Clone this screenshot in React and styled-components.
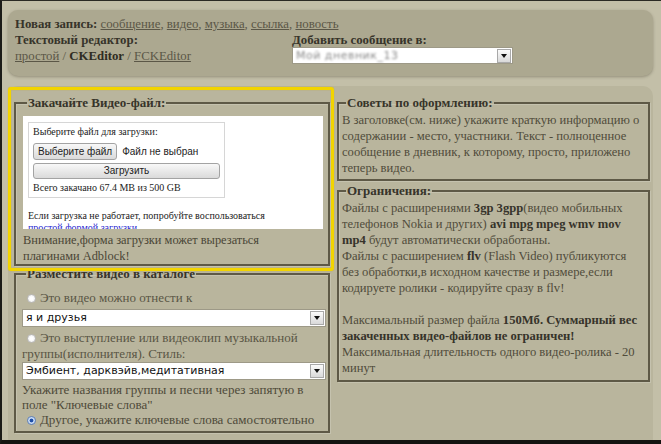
import React from "react";
import styled, { createGlobalStyle } from "styled-components";

const Global = createGlobalStyle`
  html, body { margin: 0; padding: 0; background: #c2bea7; }
  body { font-family: "Liberation Serif", "Times New Roman", serif; }
`;

const Frame = styled.div`
  width: 661px;
  height: 444px;
  box-sizing: border-box;
  background: #c3bfa8;
  border-left: 2px solid #1c1c18;
  border-top: 1px solid #2b2a24;
  border-bottom: 4px solid #141410;
  padding: 9px 8px 0 6px;
  display: flex;
  flex-direction: column;
  gap: 10px;
  overflow: hidden;
  font-size: 13px;
  color: #4b4737;
`;

const TopPanel = styled.section`
  background: #aca890;
  border-radius: 10px;
  height: 66px;
  flex: none;
  box-sizing: border-box;
  padding: 6px 7px 0 7px;
  box-shadow: 0 1px 3px rgba(60, 55, 40, 0.35);
  font-size: 12.8px;
  line-height: 16px;
  color: #3b3829;
`;

const Line = styled.div`
  white-space: nowrap;
`;

const EditorRow = styled.div`
  display: grid;
  grid-template-columns: 277px 1fr;
`;

const Column = styled.div`
  display: flex;
  flex-direction: column;
  gap: ${(p) => p.$gap || 0}px;
  min-width: 0;
`;

const Strong = styled.b`
  font-weight: bold;
  color: ${(p) => p.$c || "#37342a"};
`;

const NavLink = styled.a`
  color: #5b5747;
  text-decoration: underline;
`;

const Sep = styled.span`
  color: #5b5747;
`;

const SelectBox = styled.div`
  display: flex;
  align-items: center;
  box-sizing: border-box;
  width: ${(p) => p.$w}px;
  height: ${(p) => p.$h || 18}px;
  margin-top: ${(p) => p.$mt || 0}px;
  background: #fff;
  border: 1px solid #9d9987;
  font-family: "DejaVu Sans", Verdana, sans-serif;
  font-size: 11px;
  line-height: 14px;
  color: #111;
  padding-left: 3px;
`;

const SelectText = styled.span`
  flex: 1;
  white-space: nowrap;
  overflow: hidden;
`;

const Blurred = styled.span`
  flex: 1;
  white-space: nowrap;
  overflow: hidden;
  color: #8a8a8a;
  filter: blur(0.8px);
  letter-spacing: 0.5px;
`;

const Arrow = styled.span`
  width: 14px;
  height: 14px;
  margin-right: 1px;
  box-sizing: border-box;
  border: 1px solid #a9a9a9;
  background: linear-gradient(#fbfbfb, #d9d9d9);
  display: flex;
  align-items: center;
  justify-content: center;
  &::after {
    content: "";
    border-left: 3px solid transparent;
    border-right: 3px solid transparent;
    border-top: 4px solid #111;
  }
`;

const LowerPanel = styled.main`
  flex: 1;
  background: #b9b59d;
  border-radius: 10px 10px 0 0;
  padding: 9px 3px 0 6px;
  display: grid;
  grid-template-columns: 316px 313px;
  column-gap: 7px;
  align-items: start;
`;

const Fieldset = styled.fieldset`
  margin: 0;
  border: 2px solid #5e5946;
  padding: ${(p) => p.$pad};
  min-width: 0;
  box-shadow: inset 1px 1px 0 rgba(255, 255, 255, 0.18),
    1px 1px 0 rgba(255, 255, 255, 0.18);
`;

const Legend = styled.legend`
  padding: 0 1px;
  margin-left: 4px;
  font-weight: bold;
  font-size: 13px;
  line-height: 16px;
  color: #37342a;
`;

const Highlight = styled.div`
  position: relative;
  &::after {
    content: "";
    position: absolute;
    top: -8px;
    left: -6px;
    right: -4px;
    bottom: -5px;
    border: 3px solid #f2d400;
    border-radius: 3px;
    box-shadow: 0 0 1px #c6a600, inset 0 0 1px #c6a600;
    pointer-events: none;
    z-index: 2;
  }
`;

const UploadFrame = styled.div`
  width: 300px;
  height: 113px;
  background: #fff;
  overflow: hidden;
  box-sizing: border-box;
  padding: 6px 5px 0 5px;
  font-family: "Liberation Serif", "Times New Roman", serif;
  font-size: 10px;
  line-height: 12px;
  color: #222;
`;

const UploadForm = styled.div`
  width: 197px;
  box-sizing: border-box;
  border: 1px solid #d6d6d6;
  padding: 3px 4px 3px 4px;
  display: flex;
  flex-direction: column;
`;

const FileRow = styled.div`
  display: flex;
  align-items: center;
  gap: 5px;
  margin-top: 5px;
  white-space: nowrap;
  font-family: "Liberation Sans", Arial, sans-serif;
  font-size: 10px;
  line-height: 12px;
  color: #222;
`;

const Button = styled.button`
  box-sizing: border-box;
  flex: none;
  white-space: nowrap;
  height: ${(p) => p.$h || 17}px;
  width: ${(p) => (p.$full ? "100%" : "auto")};
  margin: ${(p) => p.$mt || 0}px 0 0 0;
  padding: 0 4px;
  border: 1px solid #a3a3a3;
  border-radius: 3px;
  background: linear-gradient(#f8f8f8, #dadada);
  font-family: "Liberation Sans", Arial, sans-serif;
  font-size: 10px;
  line-height: 12px;
  color: #222;
`;

const Small = styled.div`
  margin-top: ${(p) => p.$mt || 0}px;
  white-space: nowrap;
`;

const BlueLink = styled.a`
  color: #2a2ad0;
  text-decoration: underline;
`;

const Warning = styled.p`
  margin: 3px 0 0 0;
  font-size: 12.4px;
  line-height: 16px;
  color: #4a4636;
  white-space: nowrap;
`;

const Para = styled.p`
  margin: 0;
  font-size: 12.6px;
  line-height: 16px;
  color: #504c3b;
  white-space: nowrap;
`;

const Bold = styled.b`
  color: #36332a;
`;

const RadioLine = styled.div`
  margin-top: ${(p) => p.$mt || 0}px;
  line-height: ${(p) => p.$lh || 16}px;
  color: ${(p) => p.$c || "#5a5645"};
  white-space: nowrap;
`;

const Radio = styled.span`
  display: inline-block;
  width: 9px;
  height: 9px;
  box-sizing: border-box;
  border-radius: 50%;
  margin: 0 4px 0 5px;
  vertical-align: -1px;
  border: 1px solid ${(p) => (p.$on ? "#5c7fb8" : "#b9b9b9")};
  background: ${(p) =>
    p.$on
      ? "radial-gradient(circle, #1f4fa8 0 30%, #bcd2f2 45%, #e8f0fb 100%)"
      : "radial-gradient(circle, #ffffff 0 30%, #e4e4e4 100%)"};
`;

export default function App() {
  return (
    <>
      <Global />
      <Frame>
        <TopPanel>
          <Line>
            <Strong>Новая запись:</Strong> <NavLink>сообщение</NavLink>
            <Sep>, </Sep>
            <NavLink>видео</NavLink>
            <Sep>, </Sep>
            <NavLink>музыка</NavLink>
            <Sep>, </Sep>
            <NavLink>ссылка</NavLink>
            <Sep>, </Sep>
            <NavLink>новость</NavLink>
          </Line>
          <EditorRow>
            <Column>
              <Line>
                <Strong>Текстовый редактор:</Strong>
              </Line>
              <Line>
                <NavLink>простой</NavLink>
                <Sep> / </Sep>
                <Strong $c="#2f2c22">CKEditor</Strong>
                <Sep> / </Sep>
                <NavLink>FCKEditor</NavLink>
              </Line>
            </Column>
            <Column>
              <Line>
                <Strong>Добавить сообщение в:</Strong>
              </Line>
              <SelectBox $w={221} $h={17} $mt={-1}>
                <Blurred>Мой дневник_13</Blurred>
                <Arrow />
              </SelectBox>
            </Column>
          </EditorRow>
        </TopPanel>

        <LowerPanel>
          <Column $gap={0}>
            <Highlight>
              <Fieldset $pad="5px 5px 0 7px">
                <Legend>Закачайте Видео-файл:</Legend>
                <UploadFrame>
                  <UploadForm>
                    <Small>Выберите файл для загрузки:</Small>
                    <FileRow>
                      <Button>Выберите файл</Button>
                      <span>Файл не выбран</span>
                    </FileRow>
                    <Button $full $mt={3} $h={16}>
                      Загрузить
                    </Button>
                    <Small $mt={3}>Всего закачано 67.4 MB из 500 GB</Small>
                  </UploadForm>
                  <Small $mt={12}>
                    Если загрузка не работает, попробуйте воспользоваться
                  </Small>
                  <Small>
                    <BlueLink>простой формой загрузки</BlueLink>
                  </Small>
                </UploadFrame>
                <Warning>
                  Внимание,форма загрузки может вырезаться
                  <br />
                  плагинами Adblock!
                </Warning>
              </Fieldset>
            </Highlight>

            <Fieldset $pad="8px 2px 4px 6px">
              <Legend>Разместите видео в каталоге</Legend>
              <RadioLine>
                <Radio />
                Это видео можно отнести к
              </RadioLine>
              <SelectBox $w={304} $mt={3}>
                <SelectText>я и друзья</SelectText>
                <Arrow />
              </SelectBox>
              <RadioLine $mt={3}>
                <Radio />
                Это выступление или видеоклип музыкальной
                <br />
                группы(исполнителя). Стиль:
              </RadioLine>
              <SelectBox $w={304}>
                <SelectText>Эмбиент, дарквэйв,медитативная</SelectText>
                <Arrow />
              </SelectBox>
              <RadioLine $mt={2} $lh={15} $c="#4e4a39">
                Укажите названия группы и песни через запятую в
                <br />
                поле "Ключевые слова"
              </RadioLine>
              <RadioLine $lh={15} $c="#4e4a39">
                <Radio $on />
                Другое, укажите ключевые слова самостоятельно
              </RadioLine>
            </Fieldset>
          </Column>

          <Column $gap={2}>
            <Fieldset $pad="1px 2px 3px 3px">
              <Legend>Советы по оформлению:</Legend>
              <Para>
                В заголовке(см. ниже) укажите краткую информацию о
                <br />
                содержании - место, участники. Текст - полноценное
                <br />
                сообщение в дневник, к которому, просто, приложено
                <br />
                теперь видео.
              </Para>
            </Fieldset>
            <Fieldset $pad="1px 2px 4px 3px">
              <Legend>Ограничения:</Legend>
              <Para>
                Файлы с расширениями <Bold>3gp 3gpp</Bold>(видео мобильных
                <br />
                телефонов Nokia и других) <Bold>avi mpg mpeg wmv mov</Bold>
                <br />
                <Bold>mp4</Bold> будут автоматически обработаны.
                <br />
                Файлы с расширением <Bold>flv</Bold> (Flash Video) публикуются
                <br />
                без обработки,в исходном качестве и размере,если
                <br />
                кодируете ролики - кодируйте сразу в flv!
                <br />
                <br />
                Максимальный размер файла <Bold>150Мб. Суммарный вес</Bold>
                <br />
                <Bold>закаченных видео-файлов не ограничен!</Bold>
                <br />
                Максимальная длительность одного видео-ролика - 20
                <br />
                минут
              </Para>
            </Fieldset>
          </Column>
        </LowerPanel>
      </Frame>
    </>
  );
}
